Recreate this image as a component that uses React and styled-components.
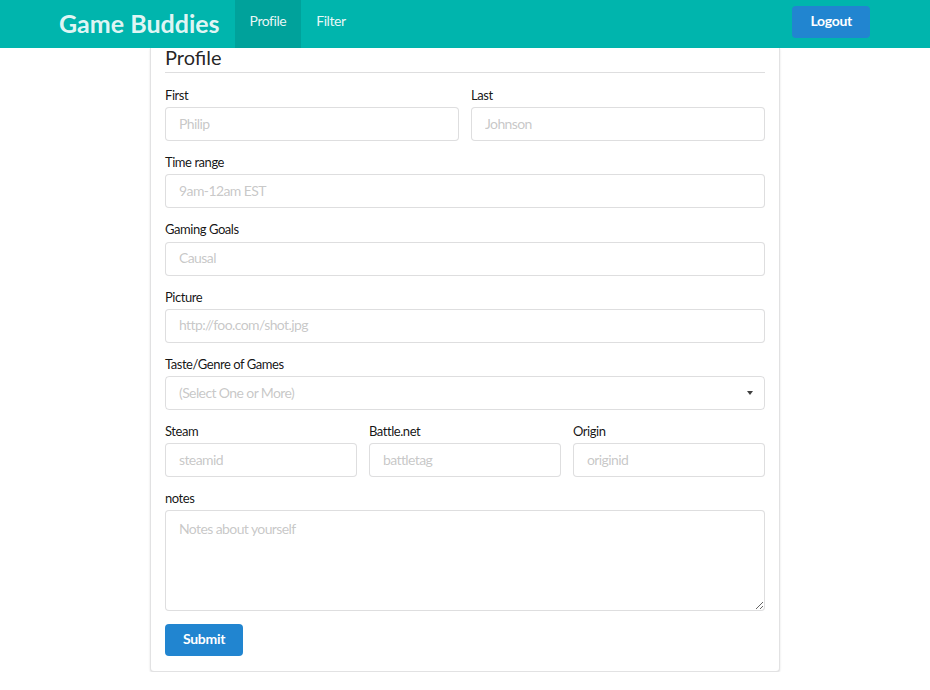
import React from 'react'
import styled, { createGlobalStyle } from 'styled-components'

const GlobalStyle = createGlobalStyle`
  * { box-sizing: border-box; }
  body {
    margin: 0;
    background: #fff;
    font-family: Lato, "Helvetica Neue", Arial, sans-serif;
    font-size: 14px;
    color: rgba(0, 0, 0, 0.87);
  }
  input::placeholder, textarea::placeholder {
    color: rgba(191, 191, 191, 0.87);
  }
`

const NavBar = styled.nav`
  height: 48px;
  background: #00b5ad;
  display: flex;
  align-items: stretch;
  padding: 0 60px 0 44px;
`
const Brand = styled.a`
  display: flex;
  align-items: center;
  padding: 0 15px 3px;
  font-size: 25px;
  font-weight: 700;
  color: rgba(255, 255, 255, 0.9);
  text-decoration: none;
`
const NavItem = styled.a`
  display: flex;
  align-items: center;
  padding: 0 15px 7px;
  font-size: 14px;
  letter-spacing: -0.45px;
  color: rgba(255, 255, 255, 0.92);
  background: ${({ active }) => (active ? 'rgba(0, 0, 0, 0.1)' : 'transparent')};
  text-decoration: none;
`
const NavRight = styled.div`
  margin-left: auto;
  display: flex;
  align-items: center;
  padding-bottom: 4px;
`
const Button = styled.button`
  height: 32px;
  padding: 0 18px 3px;
  border: none;
  border-radius: 4px;
  background: #2185d0;
  color: #fff;
  font-family: inherit;
  font-size: 14px;
  font-weight: 700;
  letter-spacing: -0.3px;
  cursor: pointer;
`

const Card = styled.div`
  width: 630px;
  margin: 0 auto;
  padding: 0 14px 15px;
  border: 1px solid rgba(34, 36, 38, 0.13);
  border-top: none;
  border-radius: 0 0 4px 4px;
  box-shadow: 0 1px 2px 0 rgba(34, 36, 38, 0.15);
`
const Heading = styled.h2`
  margin: 0 0 14px;
  font-size: 20px;
  line-height: 18px;
  font-weight: 400;
  padding-bottom: 6px;
  border-bottom: 1px solid rgba(34, 36, 38, 0.15);
  color: rgba(0, 0, 0, 0.87);
`
const Form = styled.form`
  display: flex;
  flex-direction: column;
  gap: 13px;
  align-items: flex-start;
`
const Row = styled.div`
  width: 100%;
  display: grid;
  grid-template-columns: repeat(${({ cols }) => cols || 1}, 1fr);
  column-gap: 12px;
`
const Field = styled.div`
  display: flex;
  flex-direction: column;
  min-width: 0;
`
const Label = styled.label`
  font-size: 13px;
  line-height: 16.2px;
  letter-spacing: -0.45px;
  margin-bottom: 4px;
  color: rgba(0, 0, 0, 0.92);
`
const Input = styled.input`
  height: 34px;
  width: 100%;
  padding: 0 13px 2px;
  border: 1px solid rgba(34, 36, 38, 0.15);
  border-radius: 4px;
  font-family: inherit;
  font-size: 14px;
  letter-spacing: -0.6px;
  color: rgba(0, 0, 0, 0.87);
  outline: none;
`
const TextArea = styled.textarea`
  height: 101px;
  width: 100%;
  padding: 9px 13px;
  border: 1px solid rgba(34, 36, 38, 0.15);
  border-radius: 4px;
  font-family: inherit;
  font-size: 14px;
  letter-spacing: -0.6px;
  line-height: 18px;
  outline: none;
  resize: vertical;
`
const Select = styled.div`
  height: 34px;
  display: flex;
  align-items: center;
  justify-content: space-between;
  padding: 0 10px 2px 13px;
  border: 1px solid rgba(34, 36, 38, 0.15);
  border-radius: 4px;
  font-size: 14px;
  letter-spacing: -0.6px;
  color: rgba(191, 191, 191, 0.87);
  cursor: pointer;
`
const Caret = styled.span`
  width: 0;
  height: 0;
  border-left: 3.5px solid transparent;
  border-right: 3.5px solid transparent;
  border-top: 4px solid rgba(0, 0, 0, 0.75);
  margin: 2px 1px 0 0;
`

const TextField = ({ label, placeholder }) => (
  <Field>
    <Label>{label}</Label>
    <Input placeholder={placeholder} />
  </Field>
)

export default function App() {
  return (
    <>
      <GlobalStyle />
      <NavBar>
        <Brand href="#">Game Buddies</Brand>
        <NavItem href="#" active>Profile</NavItem>
        <NavItem href="#">Filter</NavItem>
        <NavRight>
          <Button type="button">Logout</Button>
        </NavRight>
      </NavBar>
      <Card>
        <Heading>Profile</Heading>
        <Form onSubmit={(e) => e.preventDefault()}>
          <Row cols={2}>
            <TextField label="First" placeholder="Philip" />
            <TextField label="Last" placeholder="Johnson" />
          </Row>
          <Row>
            <TextField label="Time range" placeholder="9am-12am EST" />
          </Row>
          <Row>
            <TextField label="Gaming Goals" placeholder="Causal" />
          </Row>
          <Row>
            <TextField label="Picture" placeholder="http://foo.com/shot.jpg" />
          </Row>
          <Row>
            <Field>
              <Label>Taste/Genre of Games</Label>
              <Select>
                <span>(Select One or More)</span>
                <Caret />
              </Select>
            </Field>
          </Row>
          <Row cols={3}>
            <TextField label="Steam" placeholder="steamid" />
            <TextField label="Battle.net" placeholder="battletag" />
            <TextField label="Origin" placeholder="originid" />
          </Row>
          <Row>
            <Field>
              <Label>notes</Label>
              <TextArea placeholder="Notes about yourself" />
            </Field>
          </Row>
          <Button type="submit">Submit</Button>
        </Form>
      </Card>
    </>
  )
}
